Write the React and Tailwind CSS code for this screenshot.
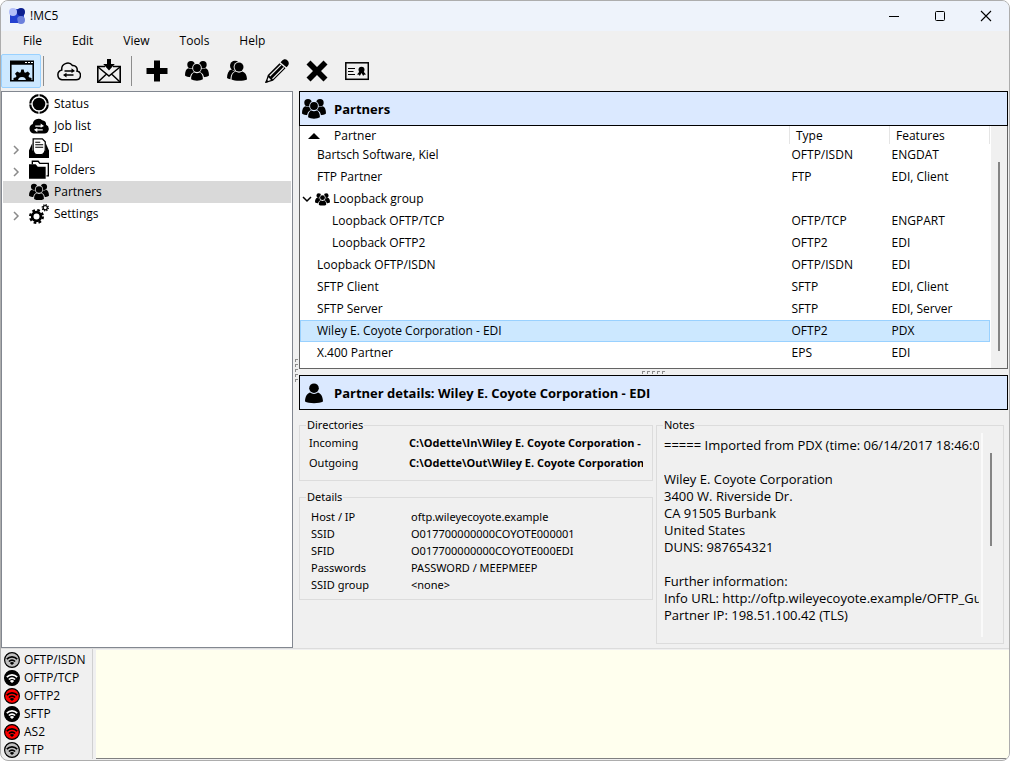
import { useState } from 'react'

function AppLogo() {
  return (
    <svg aria-hidden="true" className="size-4" viewBox="0 0 16 16">
      <rect fill="#2340d0" height="14" width="14" x="1" y="1" />
      <circle cx="12" cy="4" fill="#0c1f8f" r="4" />
      <circle cx="4" cy="4" fill="#b4bff8" r="4" />
      <circle cx="12" cy="12" fill="#6c80dc" r="4" />
      <path d="M1 8h6.500l1.500 7H1z" fill="#2340d0" />
    </svg>
  )
}

function GroupIcon({ className }) {
  return (
    <svg aria-hidden="true" className={className} fill="currentColor" viewBox="0 0 24 24">
      <mask id="group-front">
        <rect fill="white" height="24" width="24" />
        <circle cx="12" cy="9" fill="black" r="4.800" />
        <path d="M5.200 24c-1-6 .3-10 4-11h5.600c3.700 1 5 5 4 11z" fill="black" />
      </mask>
      <g mask="url(#group-front)">
        <circle cx="6" cy="5.800" r="3.700" />
        <circle cx="18" cy="5.800" r="3.700" />
        <path d="M0 16.500C0 12.500 1.200 10 3.400 9.300c1.700 1 3.500 1 5.200 0L12 13l-4 5c-3 .4-6.500 0-8-1.500z" />
        <path d="M24 16.500c0-4-1.200-6.500-3.400-7.200-1.700 1-3.500 1-5.200 0L12 13l4 5c3 .4 6.500 0 8-1.500z" />
      </g>
      <circle cx="12" cy="9" r="3.900" />
      <path d="M6.100 20.300c-.1-3.800 1.200-6.100 3.300-6.700 1.600 1 3.600 1 5.200 0 2.100.6 3.400 2.900 3.300 6.700-2.600 1.900-9.200 1.900-11.800 0z" />
    </svg>
  )
}

function PersonIcon({ className }) {
  return (
    <svg aria-hidden="true" className={className} fill="currentColor" viewBox="0 0 24 24">
      <circle cx="12" cy="7.200" r="4.800" />
      <path d="M3 20.500c.1-5 2-8 5-9 2.400 1.900 5.600 1.900 8 0 3 1 4.900 4 5 9-3.500 2.300-14.500 2.300-18 0z" />
    </svg>
  )
}

function PeopleIcon({ className }) {
  return (
    <svg aria-hidden="true" className={className} fill="currentColor" viewBox="0 0 24 24">
      <mask id="people-front">
        <rect fill="white" height="24" width="24" />
        <circle cx="14" cy="8" fill="black" r="5.400" />
        <path d="M5.500 24c-.5-7 1-11 5-11.500h8V24z" fill="black" />
      </mask>
      <g mask="url(#people-front)">
        <circle cx="10" cy="6.800" r="5" />
        <path d="M2 19c0-4.500 1.500-7.500 4.500-8.500l6 4-3 6c-3 0-6-.2-7.500-1.500z" />
      </g>
      <circle cx="14" cy="8" r="4.500" />
      <path d="M6.500 20.500c0-4.500 1.500-7.200 4.200-8 2 1.500 4.600 1.500 6.600 0 2.700.8 4.700 3.500 4.700 8-3 1.800-12.500 1.800-15.500 0z" />
    </svg>
  )
}

function WindowGearIcon({ className }) {
  return (
    <svg aria-hidden="true" className={className} viewBox="0 0 24 24">
      <path d="M0 1.500h24v4.200H0z" />
      <path d="M15 3.500h2M18 3.500h2M21 3.500h2" stroke="white" strokeWidth="1.200" />
      <path d="M.8 5v16.700h22.400V5" fill="none" stroke="black" strokeWidth="1.600" />
      <path d="M3.500 22v-3l2.500-.8.5-1.200-1.500-2.200 2.200-2.200 2.300 1.200 1.200-.5.600-2.800h2.400l.6 2.800 1.200.5 2.300-1.200 2.200 2.200-1.500 2.200.5 1.200 2.500.8v3h-5.500a4 4 0 0 0-8 0z" />
    </svg>
  )
}

function CloudIcon({ className }) {
  return (
    <svg aria-hidden="true" className={className} fill="none" stroke="black" viewBox="0 0 24 24">
      <path d="M5 20.800h14a4.400 4.400 0 0 0 1-8.700 4.300 4.300 0 0 0-4.500-5.600A6 6 0 0 0 4.800 11 5 5 0 0 0 5 20.800z" strokeWidth="1.500" />
      <path d="M7.500 12h8M8.500 16h8" strokeWidth="1.500" />
      <path d="M14.500 9.300l3.500 2.700-3.500 2zM9.500 13.700L6 16l3.500 2.500z" fill="black" stroke="none" />
    </svg>
  )
}

function MailIcon({ className }) {
  return (
    <svg aria-hidden="true" className={className} fill="none" stroke="black" viewBox="0 0 24 24">
      <path d="M8 7.500H.8v15.700h22.400V7.500H16" strokeWidth="1.600" />
      <path d="M1 8l11 9L23 8M1 23l8.500-8M23 23l-8.500-8" strokeWidth="1.500" />
      <path d="M10 0h4v5h3.800L12 11.500 6.200 5H10z" fill="black" stroke="none" />
    </svg>
  )
}

function PlusIcon({ className }) {
  return (
    <svg aria-hidden="true" className={className} viewBox="0 0 24 24">
      <path d="M9 1.500h6V9h7.500v6H15v7.500H9V15H1.500V9H9z" />
    </svg>
  )
}

function PencilIcon({ className }) {
  return (
    <svg aria-hidden="true" className={className} viewBox="0 0 24 24">
      <path d="M16.800 2c1.700-2 4-2.200 5.700-.6 1.700 1.500 1.700 3.800.2 5.600l-1.200 1.300-6-5z" />
      <path d="M14.500 4.300l6 5L8 21.800.3 24 2.800 16z" />
      <path d="M4.800 17L16 5.800M7.500 19.800L18.800 8.500" stroke="#f0f0f0" strokeWidth="1.200" />
      <path d="M3.500 18.300l2.500 2.600-3 1-.6-.6z" fill="#f0f0f0" />
      <path d="M0 24l1.300-3.500L3.500 23z" />
    </svg>
  )
}

function CrossIcon({ className }) {
  return (
    <svg aria-hidden="true" className={className} viewBox="0 0 24 24">
      <path d="M5.500 1.500L12 8l6.500-6.500 4 4L16 12l6.500 6.500-4 4L12 16l-6.500 6.500-4-4L8 12 1.500 5.500z" />
    </svg>
  )
}

function CertificateIcon({ className }) {
  return (
    <svg aria-hidden="true" className={className} viewBox="0 0 24 24">
      <rect fill="none" height="16.500" stroke="black" strokeWidth="1.500" width="22.500" x=".8" y="3.800" />
      <path d="M3 9.500h7M3 12.500h5.500M3 15.500h7" stroke="black" strokeWidth="1.200" />
      <circle cx="16.500" cy="10.800" r="3" />
      <path d="M14.500 12.500L12 15.500l2 .2.800 1.300 1.700-3 1.700 3 .8-1.300 2-.2-2.500-3z" />
    </svg>
  )
}

function StatusIcon({ className }) {
  return (
    <svg aria-hidden="true" className={className} viewBox="0 0 24 24">
      <circle cx="12" cy="12" fill="none" r="10.600" stroke="black" strokeWidth="2.600" />
      <path d="M12 0v4M12 20v4M0 12h4M20 12h4" stroke="white" strokeWidth="1.400" />
      <circle cx="12" cy="12" r="7.600" />
    </svg>
  )
}

function JobIcon({ className }) {
  return (
    <svg aria-hidden="true" className={className} viewBox="0 0 24 24">
      <path d="M5.500 21h13a5.500 5.500 0 0 0 2-10.500A5 5 0 0 0 15.800 5 6.800 6.800 0 0 0 4.500 9.500 6 6 0 0 0 5.500 21z" />
      <path d="M7.500 12h8M8.500 16.500h8" stroke="white" strokeWidth="1.500" />
      <path d="M14 9l4 3-4 2zM10 14.500l-4 2 4 3z" fill="white" />
    </svg>
  )
}

function TrayIcon({ className }) {
  return (
    <svg aria-hidden="true" className={className} viewBox="0 0 24 24">
      <path d="M0 15L4 6v9zM24 15l-4-9v9zM0 15h5c1 0 1 4 3 4.500h8c2-.5 2-4.500 3-4.500h5v9H0z" />
      <path d="M5 14.500V1h11l3.500 3.500v10c-1.500 5-3 5.500-7.500 5.500s-6-.5-7-5.500z" fill="white" stroke="black" strokeWidth="1.500" />
      <path d="M7.500 5h6M7.500 8h9.500M7.500 11h9.500" stroke="black" strokeWidth="1.300" />
    </svg>
  )
}

function FoldersIcon({ className }) {
  return (
    <svg aria-hidden="true" className={className} viewBox="0 0 24 24">
      <path d="M4 5V1.500h7l2 2.500h10.200v15H21" fill="none" stroke="black" strokeWidth="1.600" />
      <path d="M0 5h8l2.500 3H20v14.500H0z" />
    </svg>
  )
}

function GearsIcon({ className }) {
  return (
    <svg aria-hidden="true" className={className} fill="none" stroke="black" viewBox="0 0 24 24">
      <circle cx="9" cy="15" r="5.200" strokeWidth="3.200" />
      <circle cx="9" cy="15" r="7.600" strokeDasharray="3.200 2.770" strokeWidth="2.800" />
      <circle cx="19.500" cy="4.500" r="2.500" strokeWidth="1.500" />
      <circle cx="19.500" cy="4.500" r="3.700" strokeDasharray="1.500 1.400" strokeWidth="1.500" />
    </svg>
  )
}

function Chevron({ className, d }) {
  return (
    <svg aria-hidden="true" className={className} fill="none" stroke="currentColor" strokeWidth="1.500" viewBox="0 0 10 10">
      <path d={d} />
    </svg>
  )
}

function SignalIcon({ fill, ink }) {
  return (
    <svg aria-hidden="true" className="size-4" fill="none" viewBox="0 0 16 16">
      <circle cx="8" cy="8" fill={fill} r="7.400" stroke="black" strokeWidth="1.200" />
      <path d="M2.800 7.200c3-3 7.400-3 10.400 0M4.900 9.500c1.900-1.900 4.300-1.900 6.200 0" stroke={ink} strokeWidth="1.700" />
      <path d="M8 13l-2.200-2.100c1.300-1.100 3.100-1.100 4.400 0z" fill={ink} />
    </svg>
  )
}

const menus = ['File', 'Edit', 'View', 'Tools', 'Help']

const toolbar = [
  [{ label: 'Main window', Icon: WindowGearIcon, active: true }],
  [
    { label: 'Transfer', Icon: CloudIcon },
    { label: 'Receive', Icon: MailIcon },
  ],
  [
    { label: 'Add', Icon: PlusIcon },
    { label: 'Partner groups', Icon: GroupIcon },
    { label: 'Copy partner', Icon: PeopleIcon },
    { label: 'Edit partner', Icon: PencilIcon },
    { label: 'Delete', Icon: CrossIcon },
    { label: 'Certificates', Icon: CertificateIcon },
  ],
]

const treeItems = [
  { label: 'Status', Icon: StatusIcon },
  { label: 'Job list', Icon: JobIcon },
  { label: 'EDI', Icon: TrayIcon, expandable: true },
  { label: 'Folders', Icon: FoldersIcon, expandable: true },
  { label: 'Partners', Icon: GroupIcon },
  { label: 'Settings', Icon: GearsIcon, expandable: true },
]

const partners = [
  { name: 'Bartsch Software, Kiel', type: 'OFTP/ISDN', features: 'ENGDAT' },
  { name: 'FTP Partner', type: 'FTP', features: 'EDI, Client' },
  { name: 'Loopback group', group: true },
  { name: 'Loopback OFTP/TCP', type: 'OFTP/TCP', features: 'ENGPART', nested: true },
  { name: 'Loopback OFTP2', type: 'OFTP2', features: 'EDI', nested: true },
  { name: 'Loopback OFTP/ISDN', type: 'OFTP/ISDN', features: 'EDI' },
  { name: 'SFTP Client', type: 'SFTP', features: 'EDI, Client' },
  { name: 'SFTP Server', type: 'SFTP', features: 'EDI, Server' },
  { name: 'Wiley E. Coyote Corporation - EDI', type: 'OFTP2', features: 'PDX' },
  { name: 'X.400 Partner', type: 'EPS', features: 'EDI' },
]

const directories = [
  ['Incoming', 'C:\\Odette\\In\\Wiley E. Coyote Corporation - EDI'],
  ['Outgoing', 'C:\\Odette\\Out\\Wiley E. Coyote Corporation - EDI'],
]

const details = [
  ['Host / IP', 'oftp.wileyecoyote.example'],
  ['SSID', 'O017700000000COYOTE000001'],
  ['SFID', 'O017700000000COYOTE000EDI'],
  ['Passwords', 'PASSWORD / MEEPMEEP'],
  ['SSID group', '<none>'],
]

const notes = `===== Imported from PDX (time: 06/14/2017 18:46:06) =====

Wiley E. Coyote Corporation
3400 W. Riverside Dr.
CA 91505 Burbank
United States
DUNS: 987654321

Further information:
Info URL: http://oftp.wileyecoyote.example/OFTP_Guide.pdf
Partner IP: 198.51.100.42 (TLS)`

const services = [
  { label: 'OFTP/ISDN', fill: '#c0c0c0', ink: '#000000' },
  { label: 'OFTP/TCP', fill: '#000000', ink: '#ffffff' },
  { label: 'OFTP2', fill: '#ff0000', ink: '#000000' },
  { label: 'SFTP', fill: '#000000', ink: '#ffffff' },
  { label: 'AS2', fill: '#ff0000', ink: '#000000' },
  { label: 'FTP', fill: '#c0c0c0', ink: '#000000' },
]

function TitleBar() {
  return (
    <header className="flex h-[30px] shrink-0 items-center bg-[#eef3fb] pl-2">
      <AppLogo />
      <h1 className="ml-[5px] flex-1 text-xs">!MC5</h1>
      <button aria-label="Minimize" className="flex h-full w-[46px] items-center justify-center" type="button">
        <svg className="size-3" stroke="black" viewBox="0 0 12 12"><path d="M1 6.500h10" /></svg>
      </button>
      <button aria-label="Maximize" className="flex h-full w-[46px] items-center justify-center" type="button">
        <svg className="size-3" fill="none" stroke="black" viewBox="0 0 12 12"><rect height="9" rx="1" width="9" x="1.500" y="1.500" /></svg>
      </button>
      <button aria-label="Close" className="flex h-full w-[46px] items-center justify-center" type="button">
        <svg className="size-3" stroke="black" strokeWidth="1.100" viewBox="0 0 12 12"><path d="M1 1l10 10M11 1L1 11" /></svg>
      </button>
    </header>
  )
}

function Toolbar() {
  return (
    <div className="flex h-10 shrink-0 items-center">
      {toolbar.map((group, index) => (
        <div className="flex items-center" key={group[0].label}>
          {index > 0 && <span className="mr-[5px] ml-[2px] h-[30px] w-px bg-[#8c8c8c]" />}
          {group.map(({ label, Icon, active }) => (
            <button
              aria-label={label}
              className={
                active
                  ? 'flex h-[34px] w-10 items-center justify-center rounded-xs border border-[#99d1ff] bg-[#cce8ff] pl-px'
                  : 'flex h-[34px] w-10 items-center justify-center'
              }
              key={label}
              type="button"
            >
              <Icon className="size-6" />
            </button>
          ))}
        </div>
      ))}
    </div>
  )
}

function Tree() {
  const [current, setCurrent] = useState('Partners')

  return (
    <nav className="w-[292px] shrink-0 border border-[#828790] bg-white p-px">
      <ul>
        {treeItems.map(({ label, Icon, expandable }) => (
          <li key={label}>
            <button
              className={
                current === label
                  ? 'flex h-[22px] w-full items-center bg-[#d9d9d9]'
                  : 'flex h-[22px] w-full items-center'
              }
              onClick={() => setCurrent(label)}
              type="button"
            >
              <span className="flex w-[26px] items-center pt-1 pl-2">
                {expandable && <Chevron className="size-[10px] text-[#8a8a8a]" d="M3 1l4 4-4 4" />}
              </span>
              <Icon className="size-5" />
              <span className="ml-[5px]">{label}</span>
            </button>
          </li>
        ))}
      </ul>
    </nav>
  )
}

function PanelHeader({ children, icon }) {
  return (
    <div className="flex h-[35px] shrink-0 items-center border border-black bg-[#dbe9ff] pl-[2px]">
      {icon}
      <h2 className="ml-2 text-[13px] font-bold">{children}</h2>
    </div>
  )
}

function PartnerTable({ selected, onSelect }) {
  return (
    <div className="flex flex-1 border border-t-0 border-[#646464] bg-white">
      <div className="min-w-0 flex-1 pr-px">
        <table className="w-full table-fixed text-left">
          <colgroup>
            <col />
            <col className="w-[100px]" />
            <col className="w-[100px]" />
          </colgroup>
          <thead>
            <tr className="h-[18px]">
              <th className="border-r border-[#e5e5e5] p-0 pt-[2px] font-normal">
                <span className="flex items-center pl-2">
                  <svg aria-hidden="true" className="h-[6px] w-3" viewBox="0 0 12 6"><path d="M6 0l6 6H0z" /></svg>
                  <span className="ml-[14px]">Partner</span>
                </span>
              </th>
              <th className="border-r border-[#e5e5e5] p-0 pt-[2px] pl-[6px] font-normal">Type</th>
              <th className="border-r border-[#e5e5e5] p-0 pt-[2px] pl-[6px] font-normal">Features</th>
            </tr>
          </thead>
          <tbody>
            {partners.map((partner) => (
              <tr
                aria-selected={selected === partner.name}
                className={
                  selected === partner.name
                    ? 'h-[22px] bg-[#cce8ff] outline outline-offset-[-1px] outline-[#99d1ff]'
                    : 'h-[22px]'
                }
                key={partner.name}
                onClick={() => onSelect(partner.name)}
              >
                <td className="p-0">
                  {partner.group ? (
                    <span className="flex items-center pl-[2px]">
                      <Chevron className="size-[10px]" d="M1 3l4 4 4-4" />
                      <GroupIcon className="mx-[3px] size-[15px]" />
                      {partner.name}
                    </span>
                  ) : (
                    <span className={partner.nested ? 'pl-8' : 'pl-[17px]'}>{partner.name}</span>
                  )}
                </td>
                <td className="p-0 pl-[2px]">{partner.type}</td>
                <td className="p-0 pl-[2px]">{partner.features}</td>
              </tr>
            ))}
          </tbody>
        </table>
      </div>
      <div className="flex w-4 justify-center bg-[#f0f0f0] pt-9 pb-[17px]">
        <span className="w-[2px] bg-[#858585]" />
      </div>
    </div>
  )
}

function Group({ children, className, title }) {
  return (
    <fieldset className={`min-w-0 border border-[#dcdcdc] ${className}`}>
      <legend className="ml-[6px] px-px text-[11px] leading-4">{title}</legend>
      {children}
    </fieldset>
  )
}

function Grip({ className }) {
  return (
    <div className={className}>
      {[0, 1, 2, 3, 4].map((dot) => (
        <span className="size-[3px] border-t border-l border-[#8c8c8c]" key={dot} />
      ))}
    </div>
  )
}

function PartnerDetails() {
  return (
    <section className="flex h-[238px] shrink-0 gap-[3px] pt-[7px] pr-1 pb-1 font-['Noto_Sans',sans-serif] text-[11px]">
      <div className="flex w-[354px] shrink-0 flex-col gap-2">
        <Group className="pb-[7px]" title="Directories">
          <dl className="px-[9px] leading-5">
            {directories.map(([label, value]) => (
              <div className="flex" key={label}>
                <dt className="w-[100px] shrink-0">{label}</dt>
                <dd className="overflow-hidden font-['Open_Sans',sans-serif] font-bold whitespace-nowrap">{value}</dd>
              </div>
            ))}
          </dl>
        </Group>
        <Group className="pb-[6px]" title="Details">
          <dl className="pt-[3px] pl-[11px] leading-[17px]">
            {details.map(([label, value]) => (
              <div className="flex" key={label}>
                <dt className="w-[100px] shrink-0">{label}</dt>
                <dd>{value}</dd>
              </div>
            ))}
          </dl>
        </Group>
      </div>
      <Group className="flex-1" title="Notes">
        <div className="flex h-[207px] pr-[11px] pb-[3px] pl-[7px]">
          <div className="min-w-0 flex-1 border-r-2 border-[#fafafa] pt-1 pr-[2px]">
            <pre className="overflow-hidden font-['Open_Sans',sans-serif] text-[13px] leading-[17px]">{notes}</pre>
          </div>
          <div className="ml-[7px] pt-5">
            <div className="h-[93px] w-[2px] bg-[#858585]" />
          </div>
        </div>
      </Group>
    </section>
  )
}

export default function App() {
  const [selected, setSelected] = useState('Wiley E. Coyote Corporation - EDI')

  return (
    <div className="flex h-screen flex-col overflow-hidden rounded-lg border border-[#adadad] bg-[#f0f0f0] font-['Open_Sans','Noto_Sans',sans-serif] text-[12px] leading-4 text-black">
      <TitleBar />
      <nav className="flex h-5 shrink-0 items-center pl-[7px]">
        {menus.map((menu) => (
          <button className="px-[15px]" key={menu} type="button">
            {menu}
          </button>
        ))}
      </nav>
      <Toolbar />
      <main className="flex min-h-0 flex-1">
        <Tree />
        <div className="flex w-[6px] shrink-0 flex-col items-center">
          <Grip className="mt-[268px] flex flex-col gap-[2px]" />
        </div>
        <div className="flex min-w-0 flex-1 flex-col pr-px">
          <PanelHeader icon={<GroupIcon className="size-6" />}>Partners</PanelHeader>
          <PartnerTable onSelect={setSelected} selected={selected} />
          <Grip className="flex h-[6px] shrink-0 items-center justify-center gap-[2px]" />
          <PanelHeader icon={<PersonIcon className="size-6" />}>Partner details: {selected}</PanelHeader>
          <PartnerDetails />
        </div>
      </main>
      <footer className="flex h-[112px] shrink-0 border-t border-[#dcdcdc] pb-px">
        <ul className="w-[92px] shrink-0 border-r border-[#d0d0d0] pt-[2px] pl-[3px]">
          {services.map(({ label, fill, ink }) => (
            <li className="flex h-[18px] items-center gap-1" key={label}>
              <SignalIcon fill={fill} ink={ink} />
              {label}
            </li>
          ))}
        </ul>
        <textarea
          aria-label="Log"
          className="mt-px ml-[3px] min-w-0 flex-1 resize-none border-b border-[#808080] bg-[#ffffee] outline-none"
          readOnly
        />
      </footer>
    </div>
  )
}
